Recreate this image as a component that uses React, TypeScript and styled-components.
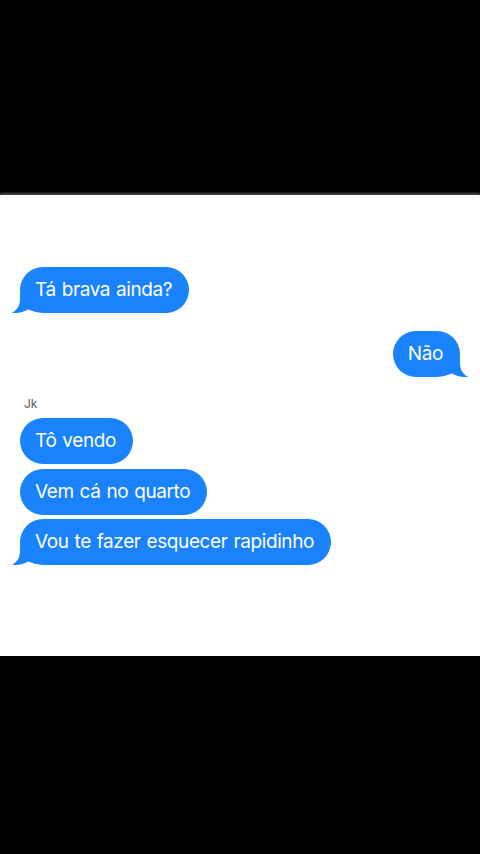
import React from "react";
import styled, { createGlobalStyle } from "styled-components";

const Global = createGlobalStyle`
  html, body { margin: 0; padding: 0; background: #000; }
  body { width: 480px; height: 854px; overflow: hidden; font-family: Inter, "Noto Sans", sans-serif; }
`;

const Screen = styled.div`
  width: 480px;
  height: 854px;
  background: #000;
  display: flex;
  flex-direction: column;
`;

const Black = styled.div<{ $h: number }>`
  height: ${(p) => p.$h}px;
  flex-shrink: 0;
  background: #000;
`;

const Panel = styled.div`
  height: 461px;
  flex-shrink: 0;
  background: #fff;
  box-shadow: 0 -2px 2px rgba(120,120,120,0.6), 0 2px 2px rgba(120,120,120,0.6);
  display: flex;
  flex-direction: column;
  padding: 72px 13px 0 20px;
  box-sizing: border-box;
`;

const Row = styled.div<{ $out?: boolean; $mt: number }>`
  display: flex;
  justify-content: ${(p) => (p.$out ? "flex-end" : "flex-start")};
  margin-top: ${(p) => p.$mt}px;
  padding-right: ${(p) => (p.$out ? "7px" : "0")};
`;

const Bubble = styled.div`
  position: relative;
  background: #1a82fb;
  color: #fff;
  font-size: 19px;
  line-height: 25px;
  padding: 10px 17px 11px 15px;
  border-radius: 23px;
  letter-spacing: -0.4px;
  word-spacing: 1px;
  white-space: nowrap;
`;

const Tail = styled.svg<{ $out?: boolean }>`
  position: absolute;
  bottom: 0;
  width: 24px;
  height: 20px;
  ${(p) => (p.$out ? "right: -8px; transform: scaleX(-1);" : "left: -8px;")}
`;

const Sender = styled.div`
  font-size: 12px;
  color: #5a5a5a;
  margin: 19px 0 7px 4px;
`;

const Msg = ({ text, out, tail, mt }: { text: string; out?: boolean; tail?: boolean; mt: number }) => (
  <Row $out={out} $mt={mt}>
    <Bubble>
      {tail && (
        <Tail $out={out} viewBox="0 0 24 20">
          <path d="M8 0 L8 6 C8 13 5 17 0 20 C6 20.5 12 19 16 16.5 L24 19 L24 0 Z" fill="#1a82fb" />
        </Tail>
      )}
      {text}
    </Bubble>
  </Row>
);

export default function App() {
  return (
    <Screen>
      <Global />
      <Black $h={195} />
      <Panel>
        <Msg text="Tá brava ainda?" tail mt={0} />
        <Msg text="Não" out tail mt={18} />
        <Sender>Jk</Sender>
        <Msg text="Tô vendo" mt={0} />
        <Msg text="Vem cá no quarto" mt={5} />
        <Msg text="Vou te fazer esquecer rapidinho" tail mt={4} />
      </Panel>
      <Black $h={198} />
    </Screen>
  );
}
